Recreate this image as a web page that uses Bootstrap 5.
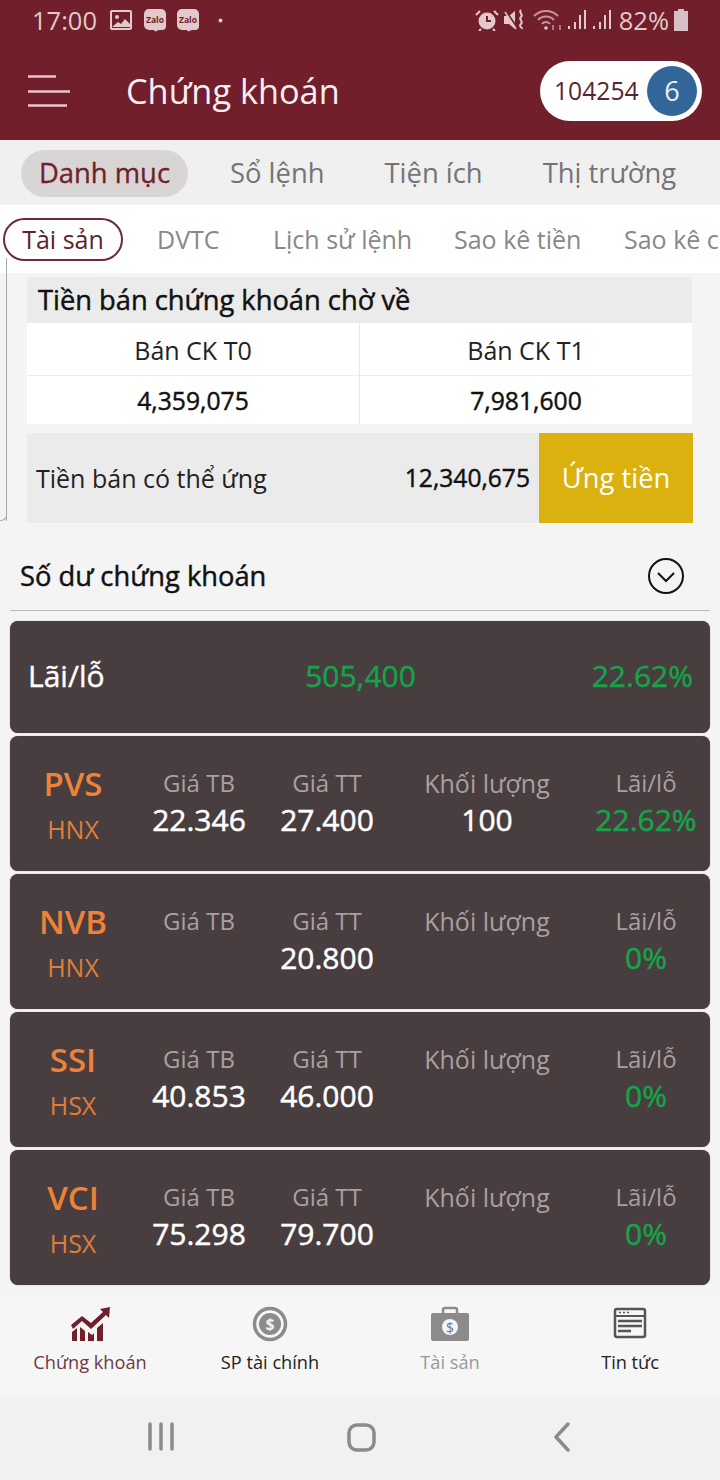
<!DOCTYPE html>
<html lang="vi"><head><meta charset="utf-8">
<link href="https://cdn.jsdelivr.net/npm/bootstrap@5.3.0/dist/css/bootstrap.min.css" rel="stylesheet">
<style>
html,body{height:1480px;overflow:hidden}
body{font-family:"Open Sans","Liberation Sans",sans-serif;background:#f4f4f4;color:#111;position:relative}
.hdr{height:140px;background:#701f2b;color:#fff}
.statusrow{height:40px;padding:0 32px 0 32px;color:#e3c9cc;font-size:25.500px;line-height:34px}
.statusrow svg{display:block;flex:none}
.titlerow{height:100px;padding:0 18px 0 28px}
.burger{width:42px;height:32px;flex:none;margin-right:57px;margin-top:2px}
.ttl{font-size:34.300px;color:#f8eef0;line-height:1;flex:1;margin-top:2px;margin-left:-1px}
.acct{width:162px;height:60px;background:#fff;border-radius:30px;padding:0 5px 0 14px;color:#5a2430;font-size:24.700px;margin-top:2px}
.acctnum{flex:1}
.acctbadge{width:50px;height:50px;border-radius:50%;background:#336699;color:#e8f0f8;font-size:27px}
.maintabs{height:65px;background:#f0f0f0;padding:10px 0 8px 21px;font-size:27.400px;color:#747474}
.maintabs>div{height:47px;line-height:46px}
.mt-on{width:167px;background:#d9d5d5;border-radius:24px;color:#701f2b;text-align:center;-webkit-text-stroke:.35px #701f2b}
.subtabs{height:68px;background:#fff;font-size:25px;color:#888;overflow:hidden;white-space:nowrap;position:relative}
.subtabs span{position:absolute;top:19px;line-height:30px}
.st-on{left:3px;width:120px;top:13px!important;height:43px;line-height:39px!important;border:2px solid #6d2a38;border-radius:22px;color:#5a2430;text-align:center}
.sideline{position:absolute;left:6px;top:258px;width:1px;height:263px;background:#a9a9a9}
.sideline::after{content:"";position:absolute;left:-6px;bottom:0;width:7px;height:7px;border-right:1px solid #a9a9a9;border-bottom:1px solid #a9a9a9;border-radius:0 0 6px 0}
.wrapT{padding:4px 28px 0 27px}
.thead{height:46px;background:#ebebeb;font-size:27.300px;padding-left:11px;line-height:46px;color:#111;-webkit-text-stroke:.45px #111}
.trow{background:#fff;font-size:25px;text-align:center}
.trow>div{flex:1 1 50%}
.trow>div:first-child{flex:0 0 332px}
.trow>div+div{border-left:1px solid #e8e8e8}
.r1{height:53px;line-height:54px;border-bottom:1px solid #ececec;color:#222}
.r2{height:48px;line-height:50px;font-size:24.700px;color:#111;-webkit-text-stroke:.45px #111}
.adv{height:90px;margin-top:9px;background:#ebebeb;font-size:25px;margin-right:-1px}
.adv-l{padding-left:9px;flex:1;color:#222;padding-top:2px}
.adv-v{margin-right:9px;font-size:24.600px;color:#111;-webkit-text-stroke:.45px #111}
.adv-b{width:154px;height:90px;background:#dab10f;color:#fff;font-size:27.300px}
.sect{height:88px;margin:0 10px;border-bottom:1px solid #bbb;padding:19px 26px 0 10px;font-size:27.300px;color:#111}
.sect span{-webkit-text-stroke:.45px #111}
.cards{padding:10px 10px 0;display:flex;flex-direction:column;gap:3px}
.dk{background:#483d3f;border-radius:8px;color:#fff;box-shadow:0 0 1px #777}
.dk-t{height:112px;padding:0 17px 4px 18px;font-size:30px;-webkit-text-stroke:.4px}
.dk-t>div{flex:1}
.grn{color:#16a34a}
.dk-r{height:135px;display:grid;grid-template-columns:126px 126px 130px 190px 128px;text-align:center;align-items:start;padding-top:26px}
.sym{font-size:33px;font-weight:600;line-height:44px;color:#ee8238}
.ex{font-size:25px;line-height:44px;color:#dd7f3b;margin-top:1px}
.lb{font-size:24px;line-height:36px;color:#a9a0a1;margin-top:3px}
.lbw{font-size:25px}
.vl{font-size:30px;line-height:38px;white-space:nowrap;-webkit-text-stroke:.5px}
.bnav{position:absolute;left:0;right:0;top:1295px;height:101px;background:#f6f6f6;font-size:18.200px}
.bnav>div{width:180px;padding-top:11px;text-align:center;line-height:24px;color:#222}
.bnav svg{display:block;margin:0 auto 8px}
.sysnav{position:absolute;left:0;right:0;top:1396px;height:84px;background:#f1f1f1;padding:26px 0 0 60px}
.sysnav>div{width:201px}
.sysnav svg{display:block}
</style></head><body>
<div class="hdr">
<div class="statusrow d-flex align-items-center">
 <span>17:00</span>
 <svg width="22" height="20" viewBox="0 0 22 20" style="margin-left:13px"><rect width="22" height="20" rx="2" fill="#e3c9cc"/><rect x="2" y="2" width="18" height="16" fill="#701f2b"/><circle cx="7" cy="7" r="2" fill="#e3c9cc"/><path d="M2 17l6-5 3 2 4-5 5 5v3z" fill="#e3c9cc"/></svg>
 <svg width="24" height="24" viewBox="0 0 24 24" style="margin-left:11px"><path d="M6 1h12a5 5 0 0 1 5 5v12a4 4 0 0 1-4 4h-3l-4 1.500-1-1.500H6a5 5 0 0 1-5-5V6a5 5 0 0 1 5-5z" fill="#e3c9cc"/><text x="12" y="15" font-size="8.500" font-weight="700" text-anchor="middle" fill="#701f2b" font-family="Open Sans">Zalo</text></svg>
 <svg width="24" height="24" viewBox="0 0 24 24" style="margin-left:9px"><path d="M6 1h12a5 5 0 0 1 5 5v12a4 4 0 0 1-4 4h-3l-4 1.500-1-1.500H6a5 5 0 0 1-5-5V6a5 5 0 0 1 5-5z" fill="#e3c9cc"/><text x="12" y="15" font-size="8.500" font-weight="700" text-anchor="middle" fill="#701f2b" font-family="Open Sans">Zalo</text></svg>
 <svg width="5" height="5" viewBox="0 0 5 5" style="margin-left:18px"><circle cx="2.500" cy="2.500" r="2" fill="#e3c9cc"/></svg>
 <div class="flex-grow-1"></div>
 <svg width="24" height="22" viewBox="0 0 24 22"><circle cx="12" cy="12" r="8.500" fill="#e3c9cc"/><path d="M12 7v5h4" stroke="#701f2b" stroke-width="2" fill="none"/><path d="M1 6l4-4M23 6l-4-4M6 20l-2 2M18 20l2 2" stroke="#e3c9cc" stroke-width="2"/></svg>
 <svg width="22" height="22" viewBox="0 0 22 22" style="margin-left:4px"><path d="M1 7h5l6-5v18L6 15H1z" fill="#e3c9cc"/><path d="M2 1l13 19" stroke="#701f2b" stroke-width="2"/><path d="M2 3l11 17" stroke="#e3c9cc" stroke-width="1.500"/><path d="M18 1c-3 3 3 4 0 7s3 4 0 7 2 3 1 5" stroke="#e3c9cc" stroke-width="2" fill="none"/></svg>
 <svg width="29" height="24" viewBox="0 0 29 24" style="margin-left:8px"><path d="M1 8a17 17 0 0 1 24 0M5 12a11 11 0 0 1 16 0M9 16a5 5 0 0 1 8 0" stroke="#c9929b" stroke-width="2" fill="none"/><circle cx="13" cy="20" r="1.800" fill="#e3c9cc"/><path d="M20 17v5M27 22v-5" stroke="#a87880" stroke-width="2"/></svg>
 <svg width="20" height="22" viewBox="0 0 20 22" style="margin-left:5px"><path d="M2 20v-3M8 20v-7M13 20V6M18 20V1" stroke="#e3c9cc" stroke-width="2"/></svg>
 <svg width="20" height="22" viewBox="0 0 20 22" style="margin-left:5px"><path d="M2 20v-3M8 20v-7M13 20V6M18 20V1" stroke="#e3c9cc" stroke-width="2"/></svg>
 <span style="margin-left:7px">82%</span>
 <svg width="14" height="22" viewBox="0 0 14 22" style="margin-left:5px"><path d="M4 0h6v2h4v20H0V2h4z" fill="#d8bfc3"/></svg>
</div>
<div class="titlerow d-flex align-items-center">
 <svg class="burger" viewBox="0 0 42 32"><path d="M0 1.500h28M0 16.500h42M0 30.500h39" stroke="#f0c4cb" stroke-width="2.500"/></svg>
 <div class="ttl">Chứng khoán</div>
 <div class="acct d-flex align-items-center"><span class="acctnum">104254</span><div class="acctbadge d-flex align-items-center justify-content-center">6</div></div>
</div>
</div>
<div class="maintabs d-flex">
 <div class="mt-on">Danh mục</div>
 <div style="margin-left:42px">Sổ lệnh</div>
 <div style="margin-left:60px">Tiện ích</div>
 <div style="margin-left:60px">Thị trường</div>
</div>
<div class="subtabs">
 <span class="st-on">Tài sản</span>
 <span style="left:157px">DVTC</span>
 <span style="left:273px">Lịch sử lệnh</span>
 <span style="left:454px">Sao kê tiền</span>
 <span style="left:624px">Sao kê chứng khoán</span>
</div>
<div class="sideline"></div>
<div class="wrapT">
 <div class="thead">Tiền bán chứng khoán chờ về</div>
 <div class="trow r1 d-flex"><div>Bán CK T0</div><div>Bán CK T1</div></div>
 <div class="trow r2 d-flex"><div>4,359,075</div><div>7,981,600</div></div>
 <div class="adv d-flex align-items-center"><div class="adv-l">Tiền bán có thể ứng</div><div class="adv-v">12,340,675</div><div class="adv-b d-flex align-items-center justify-content-center">Ứng tiền</div></div>
</div>
<div class="sect d-flex align-items-center justify-content-between"><span>Số dư chứng khoán</span>
 <svg width="36" height="36" viewBox="0 0 36 36"><circle cx="18" cy="18" r="17" fill="none" stroke="#111" stroke-width="2"/><path d="M10 15l8 8 8-8" fill="none" stroke="#111" stroke-width="2"/></svg></div>
<div class="cards">
 <div class="dk dk-t d-flex align-items-center"><div>Lãi/lỗ</div><div class="grn text-center">505,400</div><div class="grn text-end">22.62%</div></div>
 <div class="dk dk-r"><div><div class="sym">PVS</div><div class="ex">HNX</div></div><div><div class="lb">Giá TB</div><div class="vl">22.346</div></div><div><div class="lb">Giá TT</div><div class="vl">27.400</div></div><div><div class="lb lbw">Khối lượng</div><div class="vl">100</div></div><div><div class="lb">Lãi/lỗ</div><div class="vl grn">22.62%</div></div></div>
 <div class="dk dk-r"><div><div class="sym">NVB</div><div class="ex">HNX</div></div><div><div class="lb">Giá TB</div></div><div><div class="lb">Giá TT</div><div class="vl">20.800</div></div><div><div class="lb lbw">Khối lượng</div></div><div><div class="lb">Lãi/lỗ</div><div class="vl grn">0%</div></div></div>
 <div class="dk dk-r"><div><div class="sym">SSI</div><div class="ex">HSX</div></div><div><div class="lb">Giá TB</div><div class="vl">40.853</div></div><div><div class="lb">Giá TT</div><div class="vl">46.000</div></div><div><div class="lb lbw">Khối lượng</div></div><div><div class="lb">Lãi/lỗ</div><div class="vl grn">0%</div></div></div>
 <div class="dk dk-r"><div><div class="sym">VCI</div><div class="ex">HSX</div></div><div><div class="lb">Giá TB</div><div class="vl">75.298</div></div><div><div class="lb">Giá TT</div><div class="vl">79.700</div></div><div><div class="lb lbw">Khối lượng</div></div><div><div class="lb">Lãi/lỗ</div><div class="vl grn">0%</div></div></div>
</div>
<div class="bnav d-flex">
 <div style="color:#6b3a44"><svg width="42" height="36" viewBox="0 0 42 36"><path d="M2 19l11-9 9 7L34 6l-3-3 10-2-1 11-3-3-15 14-9-8-9 8z" fill="#701f2b"/><path d="M3 35V26l5-4v13zM11 35V21l5 4v10zM19 35V26l4 3 2-2v8zM28 35V22l6-5v18z" fill="#701f2b"/></svg>Chứng khoán</div>
 <div><svg width="36" height="36" viewBox="0 0 36 36"><circle cx="18" cy="18" r="15.500" fill="none" stroke="#8b8b8b" stroke-width="3.500"/><circle cx="18" cy="18" r="11" fill="#8b8b8b"/><text x="18" y="24" font-size="16" font-weight="700" text-anchor="middle" fill="#f0f0f0" font-family="Open Sans">$</text></svg>SP tài chính</div>
 <div style="color:#999"><svg width="40" height="36" viewBox="0 0 40 36"><path d="M13 8V4a2 2 0 0 1 2-2h10a2 2 0 0 1 2 2v4" fill="none" stroke="#8b8b8b" stroke-width="2.500"/><rect x="1" y="7" width="38" height="28" rx="2" fill="#8b8b8b"/><circle cx="20" cy="21" r="8" fill="#f4f4f4"/><text x="20" y="26.500" font-size="14" text-anchor="middle" fill="#777" font-family="Open Sans">$</text></svg>Tài sản</div>
 <div><svg width="36" height="36" viewBox="0 0 36 36"><rect x="3" y="3" width="30" height="28" rx="2" fill="none" stroke="#555" stroke-width="2.500"/><path d="M3 10h30" stroke="#555" stroke-width="2"/><path d="M7 6.500h2M11 6.500h2M15 6.500h2" stroke="#555" stroke-width="1.500"/><path d="M6 15h24M6 20h24M6 25h13" stroke="#555" stroke-width="2.500"/></svg>Tin tức</div>
</div>
<div class="sysnav d-flex">
 <div class="d-flex justify-content-center"><svg width="30" height="30" viewBox="0 0 30 30"><path d="M4 2v25M15 2v25M26 2v25" stroke="#8b8b8b" stroke-width="3.500" stroke-linecap="round"/></svg></div>
 <div class="d-flex justify-content-center"><svg width="30" height="30" viewBox="0 0 30 30"><rect x="2" y="3" width="25" height="25" rx="8" fill="none" stroke="#8b8b8b" stroke-width="3.500"/></svg></div>
 <div class="d-flex justify-content-center"><svg width="30" height="30" viewBox="0 0 30 30"><path d="M20 2L8 15l12 13" fill="none" stroke="#8b8b8b" stroke-width="3.500" stroke-linecap="round" stroke-linejoin="round"/></svg></div>
</div>
</body></html>
